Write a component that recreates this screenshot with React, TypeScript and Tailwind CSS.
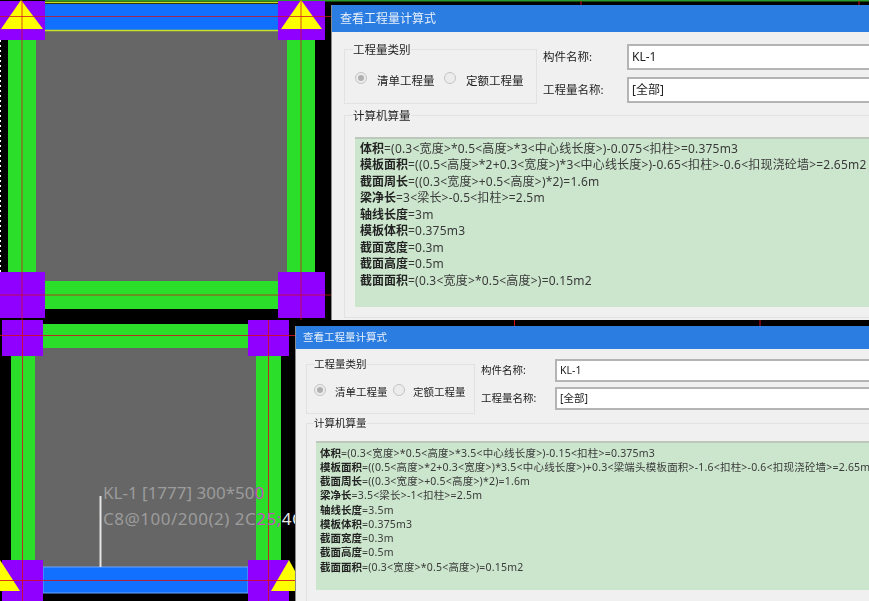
import React from "react";

type Line = { label: string; value: string };

const linesTop: Line[] = [
  { label: "体积", value: "=(0.3<宽度>*0.5<高度>*3<中心线长度>)-0.075<扣柱>=0.375m3" },
  { label: "模板面积", value: "=((0.5<高度>*2+0.3<宽度>)*3<中心线长度>)-0.65<扣柱>-0.6<扣现浇砼墙>=2.65m2" },
  { label: "截面周长", value: "=((0.3<宽度>+0.5<高度>)*2)=1.6m" },
  { label: "梁净长", value: "=3<梁长>-0.5<扣柱>=2.5m" },
  { label: "轴线长度", value: "=3m" },
  { label: "模板体积", value: "=0.375m3" },
  { label: "截面宽度", value: "=0.3m" },
  { label: "截面高度", value: "=0.5m" },
  { label: "截面面积", value: "=(0.3<宽度>*0.5<高度>)=0.15m2" },
];

const linesBottom: Line[] = [
  { label: "体积", value: "=(0.3<宽度>*0.5<高度>*3.5<中心线长度>)-0.15<扣柱>=0.375m3" },
  { label: "模板面积", value: "=((0.5<高度>*2+0.3<宽度>)*3.5<中心线长度>)+0.3<梁端头模板面积>-1.6<扣柱>-0.6<扣现浇砼墙>=2.65m2" },
  { label: "截面周长", value: "=((0.3<宽度>+0.5<高度>)*2)=1.6m" },
  { label: "梁净长", value: "=3.5<梁长>-1<扣柱>=2.5m" },
  { label: "轴线长度", value: "=3.5m" },
  { label: "模板体积", value: "=0.375m3" },
  { label: "截面宽度", value: "=0.3m" },
  { label: "截面高度", value: "=0.5m" },
  { label: "截面面积", value: "=(0.3<宽度>*0.5<高度>)=0.15m2" },
];

const PURPLE = "#8f00ff";
const GREEN = "#2ade2a";
const GRAY = "#666666";
const BLUE = "#1170ff";
const RED = "#d0101c";

function Drawing() {
  return (
    <svg className="absolute inset-0" width="869" height="601" viewBox="0 0 869 601">
      <rect x="45" y="0" width="824" height="1.5" fill="#2a9a2a" />
      <path d="M581 1v5M859 1v5M514.5 320v6M760 320v6" stroke={RED} strokeWidth="1" />

      {/* upper bay */}
      <rect x="36" y="30" width="251" height="252" fill={GRAY} />
      <rect x="8" y="40" width="28" height="232" fill={GREEN} />
      <rect x="287" y="40" width="28" height="232" fill={GREEN} />
      <rect x="45" y="281" width="233" height="28" fill={GREEN} />
      <rect x="45" y="4" width="233" height="26" fill={BLUE} />
      <path d="M22 2.5H301M22 30.5H301" stroke="#c8e020" strokeWidth="1.5" />
      <rect x="0" y="1" width="45" height="39" fill={PURPLE} />
      <rect x="278" y="1" width="47" height="39" fill={PURPLE} />
      <rect x="0" y="272" width="45" height="46" fill={PURPLE} />
      <rect x="278" y="272" width="47" height="46" fill={PURPLE} />
      <polygon points="21,0 43,29 1,29" fill="#ffff00" />
      <polygon points="301,0 322,29 281,29" fill="#ffff00" />
      <path d="M0 16.5H331M0 295H331M22 0V320M301 0V320" stroke={RED} strokeOpacity="0.75" strokeWidth="1" />
      <path d="M0.5 40V272" stroke="#ffffff" strokeWidth="1" strokeDasharray="2 3" />

      {/* lower bay */}
      <rect x="35" y="348" width="221" height="220" fill={GRAY} />
      <rect x="11" y="356" width="24" height="204" fill={GREEN} />
      <rect x="256" y="356" width="25" height="204" fill={GREEN} />
      <rect x="43" y="324" width="205" height="24" fill={GREEN} />
      <rect x="43" y="567" width="205" height="26" fill={BLUE} stroke="#6aa6ff" strokeWidth="1" />
      <rect x="2" y="320" width="41" height="36" fill={PURPLE} />
      <rect x="248" y="320" width="41" height="36" fill={PURPLE} />
      <path d="M2 560H43V601H2ZM248 560H289V601H248Z" fill={PURPLE} />
      <polygon points="0,560 20,591 0,591" fill="#ffff00" />
      <polygon points="289,560 295,571 295,591 271,591" fill="#ffff00" />
      <path d="M0 335.5H295M0 580.5H295M22.5 320V601M268.5 320V601" stroke={RED} strokeOpacity="0.85" strokeWidth="1" />
      <path d="M100.5 496V567" stroke="#e4e4e4" strokeWidth="2" />
      <text x="103" y="499" fontSize="17" fill="#9c9c9c" style={{ fontFamily: '"Noto Sans", sans-serif' }}>
        KL-1 [1777] 300*50<tspan fill="#c050c0">0</tspan>
      </text>
      <text x="103" y="525" fontSize="17" letterSpacing="0.5" fill="#9c9c9c" style={{ fontFamily: '"Noto Sans", sans-serif' }}>
        C8@100/200(2) 2C<tspan fill="#c050c0">25;</tspan>
        <tspan fill="#e8e8e8">4C</tspan>
      </text>
    </svg>
  );
}

function Formula({ lines }: { lines: Line[] }) {
  return (
    <>
      {lines.map((line) => (
        <div key={line.label} className="whitespace-nowrap">
          <span className="font-bold text-[#222]">{line.label}</span>
          <span className="tracking-[0.2px] text-[#3a3a3a]">{line.value}</span>
        </div>
      ))}
    </>
  );
}

function Radio({ checked }: { checked?: boolean }) {
  return (
    <span className="flex h-[12px] w-[12px] shrink-0 items-center justify-center rounded-full border border-[#c4c4c4] bg-[#ececec]">
      {checked && <span className="h-[6px] w-[6px] rounded-full bg-[#b0b0b0]" />}
    </span>
  );
}

const fontStack = "font-['Noto_Sans','Noto_Sans_CJK_SC',sans-serif]";

function DialogTop() {
  return (
    <div className={`absolute left-[331px] top-[5px] h-[315px] w-[538px] overflow-hidden border-l border-[#8a8a8a] bg-[#f0f0f0] text-[11.5px] leading-none text-[#222] blur-[0.3px] ${fontStack}`}>
      <div className="flex h-[27px] items-center bg-[#2b7de1] pl-[8px] text-[12px] text-[#e8f0fb]">查看工程量计算式</div>
      <div className="flex items-start pl-[12px] pt-[12px]">
        <fieldset className="h-[60px] w-[193px] shrink-0 border border-[#e2e2e2] pl-[10px]">
          <legend className="-ml-[2px] text-[11.5px]">工程量类别</legend>
          <div className="mt-[15px] flex items-center">
            <Radio checked />
            <span className="ml-[10px] mt-[4px] w-[67px]">清单工程量</span>
            <Radio />
            <span className="ml-[10px] mt-[4px]">定额工程量</span>
          </div>
        </fieldset>
        <div className="ml-[6px] grid grid-cols-[84px_400px] gap-y-[7px]">
          <span className="self-center">构件名称:</span>
          <div className="flex h-[26px] items-center border-2 border-[#b4b4b4] bg-white pl-[3px] text-[12px]">KL-1</div>
          <span className="self-center">工程量名称:</span>
          <div className="flex h-[26px] items-center border-2 border-[#b4b4b4] bg-white pl-[3px] text-[12px]">[全部]</div>
        </div>
      </div>
      <fieldset className="ml-[12px] mt-[6px] h-[208px] w-[600px] border border-[#e2e2e2] pl-[10px]">
        <legend className="-ml-[2px] text-[11.5px]">计算机算量</legend>
        <div className="mt-[15px] h-[170px] border-t-2 border-[#bcc8bc] bg-[#cce6cd] pl-[5px] pt-[2px] text-[12px] leading-[16.5px]">
          <Formula lines={linesTop} />
        </div>
      </fieldset>
    </div>
  );
}

function DialogBottom() {
  return (
    <div className={`absolute left-[295px] top-[326px] h-[275px] w-[574px] overflow-hidden border-l border-[#8a8a8a] bg-[#f0f0f0] text-[10.5px] leading-none text-[#222] blur-[0.3px] ${fontStack}`}>
      <div className="flex h-[23px] items-center bg-[#2b7de1] pl-[7px] text-[10.5px] text-[#e8f0fb]">查看工程量计算式</div>
      <div className="flex items-start pl-[10px] pt-[10px]">
        <fieldset className="h-[55px] w-[169px] shrink-0 border border-[#e2e2e2] pl-[7px]">
          <legend className="text-[10.5px]">工程量类别</legend>
          <div className="mt-[14px] flex items-center">
            <Radio checked />
            <span className="ml-[9px] mt-[3px] w-[58px]">清单工程量</span>
            <Radio />
            <span className="ml-[8px] mt-[3px]">定额工程量</span>
          </div>
        </fieldset>
        <div className="ml-[6px] grid grid-cols-[74px_400px] gap-y-[5px]">
          <span className="self-center">构件名称:</span>
          <div className="flex h-[23px] items-center border-2 border-[#b4b4b4] bg-white pl-[3px]">KL-1</div>
          <span className="self-center">工程量名称:</span>
          <div className="flex h-[23px] items-center border-2 border-[#b4b4b4] bg-white pl-[3px]">[全部]</div>
        </div>
      </div>
      <fieldset className="ml-[10px] mt-[4px] h-[190px] w-[600px] border border-[#e2e2e2] pl-[9px]">
        <legend className="-ml-[2px] text-[10.5px]">计算机算量</legend>
        <div className="mt-[12px] h-[149px] border-t-2 border-[#bcc8bc] bg-[#cce6cd] pl-[4px] pt-[3px] text-[10.5px] leading-[14.25px]">
          <Formula lines={linesBottom} />
        </div>
      </fieldset>
    </div>
  );
}

export default function App() {
  return (
    <div className="relative h-[601px] w-[869px] overflow-hidden bg-black">
      <Drawing />
      <DialogTop />
      <DialogBottom />
    </div>
  );
}
